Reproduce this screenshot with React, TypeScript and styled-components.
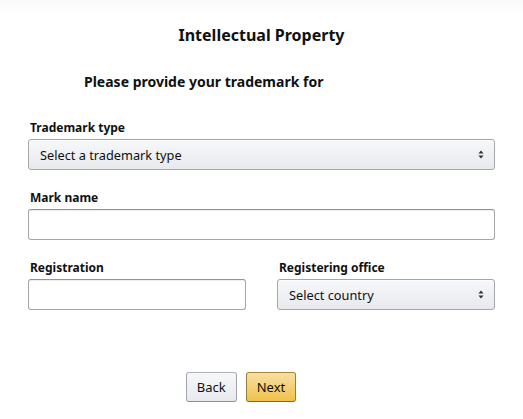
import React from "react";
import styled, { createGlobalStyle } from "styled-components";

const Global = createGlobalStyle`
  html, body { margin: 0; padding: 0; background: #fff; }
  body { font-family: "Noto Sans", "Open Sans", Arial, sans-serif; color: #0f1111; }
  * { box-sizing: border-box; }
`;

const Page = styled.div`
  width: 523px;
  height: 419px;
  padding: 0 28px;
  display: flex;
  flex-direction: column;
  background: linear-gradient(#fafafa, #fff 14px);
`;

const Title = styled.h1`
  margin: 24px 0 0;
  font-size: 16px;
  line-height: 22px;
  font-weight: 700;
  text-align: center;
`;

const Subtitle = styled.h2`
  margin: 26px 0 0;
  padding-left: 56px;
  font-size: 14px;
  line-height: 20px;
  font-weight: 700;
`;

const Field = styled.div<{ $top: number }>`
  display: flex;
  flex-direction: column;
  margin-top: ${(p) => p.$top}px;
  min-width: 0;
`;

const Label = styled.label`
  padding-left: 2px;
  font-size: 12px;
  line-height: 19px;
  font-weight: 700;
  margin-bottom: 2px;
`;

const SelectBox = styled.div`
  height: 31px;
  border: 1px solid #a6a6a6;
  border-radius: 3px;
  background: linear-gradient(#f7f8fa, #e7e9ec);
  box-shadow: 0 1px 0 rgba(255,255,255,.6) inset;
  display: flex;
  align-items: center;
  justify-content: space-between;
  padding: 0 10px 0 11px;
  font-size: 12.75px;
  color: #0f1111;
`;

const Input = styled.input`
  height: 31px;
  width: 100%;
  border: 1px solid #a6a6a6;
  border-top-color: #949494;
  border-radius: 3px;
  box-shadow: 0 1px 0 rgba(255,255,255,.5), 0 1px 0 rgba(0,0,0,.07) inset;
  background: #fff;
  font: inherit;
  outline: none;
`;

const Row = styled.div`
  display: grid;
  grid-template-columns: 1fr 1fr;
  column-gap: 31px;
`;

const Buttons = styled.div`
  margin-top: 62px;
  display: flex;
  justify-content: center;
  gap: 9px;
  padding-right: 41px;
`;

const Button = styled.button<{ $primary?: boolean }>`
  height: 30px;
  padding: 0 10px;
  min-width: 50px;
  border-radius: 3px;
  font-family: inherit;
  font-size: 13px;
  color: #0f1111;
  border: 1px solid ${(p) => (p.$primary ? "#a88734" : "#adb1b8")};
  border-color: ${(p) =>
    p.$primary ? "#a88734 #9c7e31 #846a29" : "#adb1b8 #a2a6ac #8d9096"};
  background: ${(p) =>
    p.$primary
      ? "linear-gradient(#f7dfa5, #f0c14b)"
      : "linear-gradient(#f7f8fa, #e7e9ec)"};
`;

const Arrows = () => (
  <svg width="6" height="9" viewBox="0 0 6 9">
    <path d="M3 0.5 L5.6 3.6 H0.4 Z M3 8.5 L5.6 5.4 H0.4 Z" fill="#333" />
  </svg>
);

export default function App() {
  return (
    <>
      <Global />
      <Page>
        <Title>Intellectual Property</Title>
        <Subtitle>Please provide your trademark for</Subtitle>
        <Field $top={26}>
          <Label>Trademark type</Label>
          <SelectBox>
            <span>Select a trademark type</span>
            <Arrows />
          </SelectBox>
        </Field>
        <Field $top={18}>
          <Label>Mark name</Label>
          <Input />
        </Field>
        <Row>
          <Field $top={18}>
            <Label>Registration</Label>
            <Input />
          </Field>
          <Field $top={18}>
            <Label>Registering office</Label>
            <SelectBox>
              <span>Select country</span>
              <Arrows />
            </SelectBox>
          </Field>
        </Row>
        <Buttons>
          <Button>Back</Button>
          <Button $primary>Next</Button>
        </Buttons>
      </Page>
    </>
  );
}
